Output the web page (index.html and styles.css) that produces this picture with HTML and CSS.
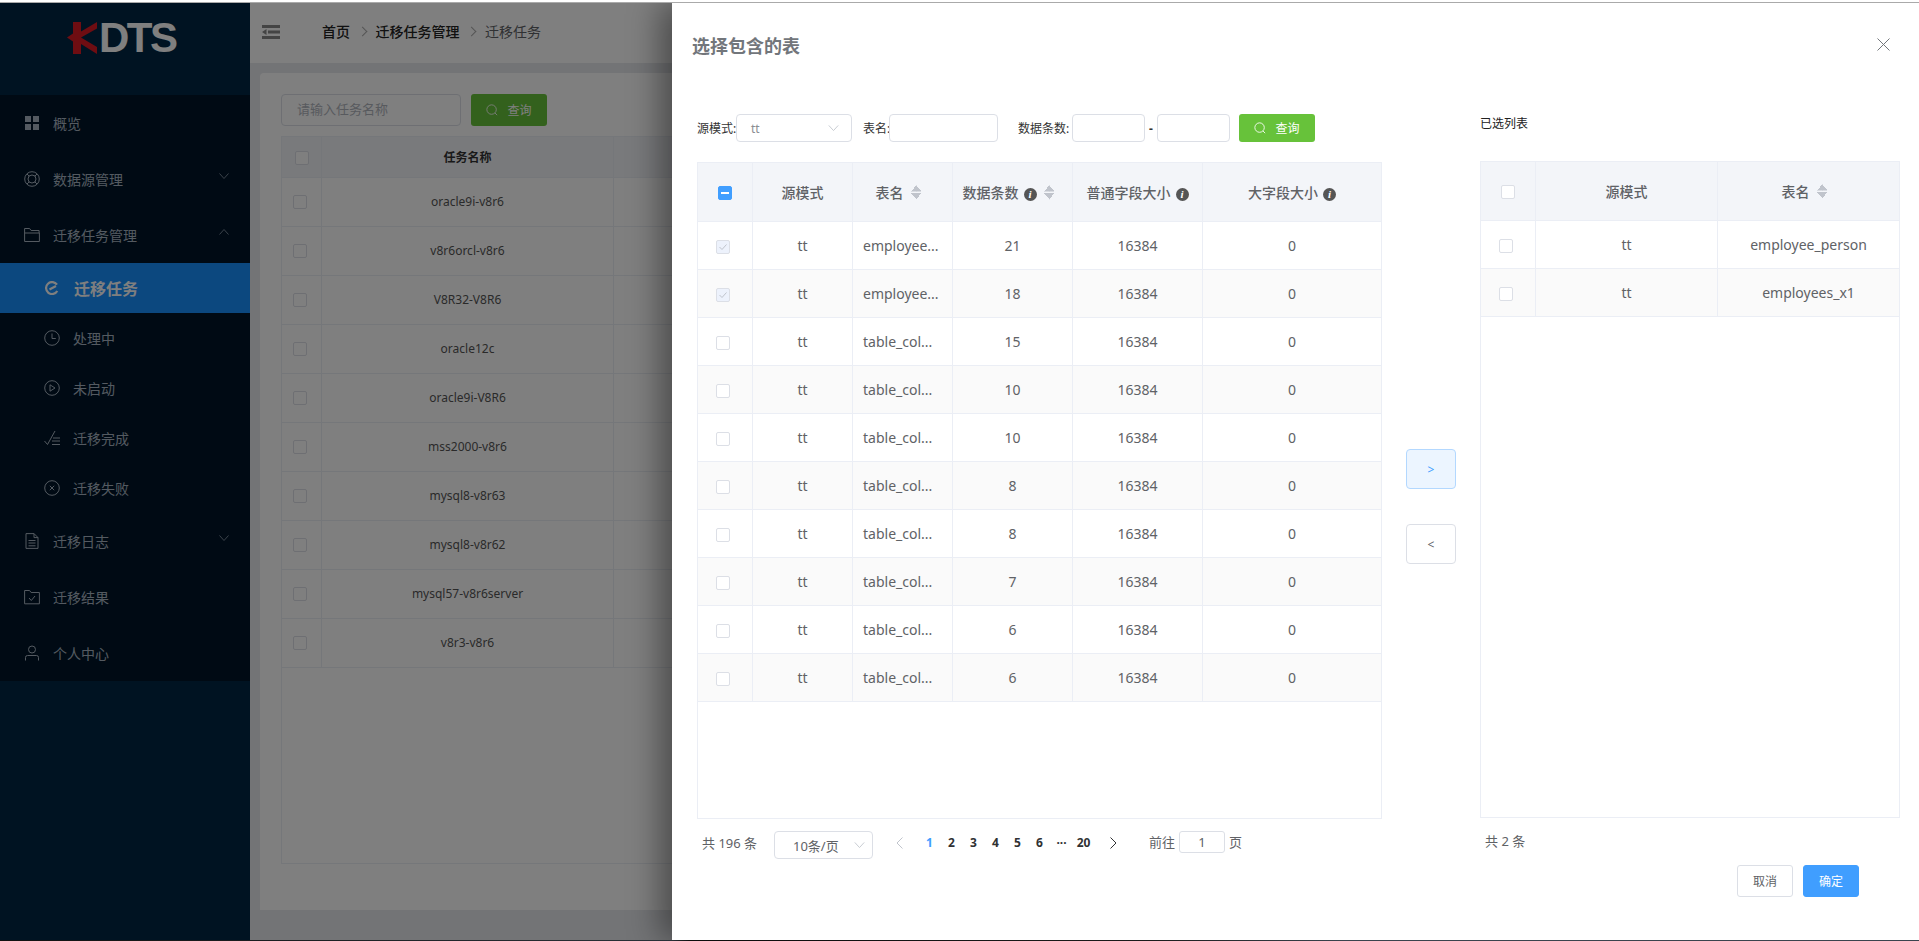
FILE: index.html
```html
<!DOCTYPE html>
<html lang="zh-CN">
<head>
<meta charset="utf-8">
<title>KDTS 迁移任务</title>
<link rel="stylesheet" href="styles.css">
</head>
<body>
<div class="top-strip"></div>
<div class="stage">
  <div class="app">
    <aside class="sidebar">
      <div class="logo">
        <svg class="logo-k" viewBox="0 0 30 32" width="30" height="32"><path fill="#dc1a24" d="M6 0h8v9.5L30 0v6.5L14 15.500 30 25v7L14 22v10H6V19.500L0 15.500l6-4z"/></svg>
        <span class="logo-text">DTS</span>
      </div>
      <nav class="menu">
        <a class="mi"><svg class="ic" viewBox="0 0 16 16"><path fill="currentColor" d="M1 1h6v6H1zM9 1h6v6H9zM1 9h6v6H1zM9 9h6v6H9z"/></svg><span>概览</span></a>
        <a class="mi"><svg class="ic" viewBox="0 0 16 16" fill="none" stroke="currentColor"><circle cx="8" cy="8" r="7.300"/><circle cx="8" cy="8" r="4"/><path d="M3 3l2.200 2.200M13 3l-2.200 2.200M3 13l2.200-2.200M13 13l-2.200-2.200"/></svg><span>数据源管理</span><svg class="chev" viewBox="0 0 10 6"><path d="M.5.5L5 5.500 9.500.5"/></svg></a>
        <a class="mi"><svg class="ic" viewBox="0 0 16 16" fill="none" stroke="currentColor"><path d="M.6 14.500V1.500h5l1.500 2h8v2.500M.6 14.500h14.800V6H.6"/></svg><span>迁移任务管理</span><svg class="chev" viewBox="0 0 10 6"><path d="M.5 5.500L5 .5l4.500 5"/></svg></a>
        <a class="si active"><svg class="ic-a" viewBox="0 0 14 14" fill="none" stroke="currentColor" stroke-width="2.200"><path d="M12 3.600A6 6 0 1 0 12.300 10M4.500 8.500L11 5"/></svg><span>迁移任务</span></a>
        <a class="si"><svg class="ic" viewBox="0 0 16 16" fill="none" stroke="currentColor"><circle cx="8" cy="8" r="7.300"/><path d="M8 3.500V8.500h3.800"/></svg><span>处理中</span></a>
        <a class="si"><svg class="ic" viewBox="0 0 16 16" fill="none" stroke="currentColor"><circle cx="8" cy="8" r="7.300"/><path d="M6 4.800v6.400L11 8z"/></svg><span>未启动</span></a>
        <a class="si"><svg class="ic" viewBox="0 0 16 16" fill="none" stroke="currentColor"><path d="M.5 11l3 3.500L11 1M9 8h7M8 11h8M8 14.500h8"/></svg><span>迁移完成</span></a>
        <a class="si"><svg class="ic" viewBox="0 0 16 16" fill="none" stroke="currentColor"><circle cx="8" cy="8" r="7.300"/><path d="M5.800 5.800l4.400 4.400M10.200 5.800l-4.400 4.400"/></svg><span>迁移失败</span></a>
        <a class="mi"><svg class="ic" viewBox="0 0 16 16" fill="none" stroke="currentColor"><path d="M2 .6h8l4 4v10.800H2zM10 .6v4h4M4.500 7.500h7M4.500 10h7M4.500 12.800h7"/></svg><span>迁移日志</span><svg class="chev" viewBox="0 0 10 6"><path d="M.5.5L5 5.500 9.500.5"/></svg></a>
        <a class="mi"><svg class="ic" viewBox="0 0 16 16" fill="none" stroke="currentColor"><path d="M.6 14.800V1.500h5l1.500 2h8.300v11.300zM5 9l2.300 2.500L11 7"/></svg><span>迁移结果</span></a>
        <a class="mi"><svg class="ic" viewBox="0 0 16 16" fill="none" stroke="currentColor"><circle cx="8" cy="4.500" r="3.500"/><path d="M1.500 15.500V12.500q0-2 2-2h9q2 0 2 2v3"/></svg><span>个人中心</span></a>
      </nav>
    </aside>
    <main class="main">
      <header class="topbar">
        <svg class="burger" viewBox="0 0 18 14"><path fill="#888" d="M0 0h18v3H0zM0 11h18v3H0zM6 5.500h12v3H6zM4.500 4v6L0 7z"/></svg>
        <div class="crumbs">
          <b>首页</b><i class="sep"></i><b>迁移任务管理</b><i class="sep"></i><span>迁移任务</span>
        </div>
      </header>
      <section class="content">
        <div class="card">
          <div class="search">
            <div class="s-input">请输入任务名称</div>
            <button class="s-btn"><svg class="mag" viewBox="0 0 14 14" fill="none" stroke="currentColor"><circle cx="6.500" cy="6.500" r="5.500"/><path d="M10.500 10.500l2.500 2.500"/></svg>查询</button>
          </div>
          <div class="bg-table">
            <table class="tb tb-bg">
              <colgroup><col class="c40"><col class="c293"><col></colgroup>
              <thead><tr><th><i class="cb"></i></th><th>任务名称</th><th></th></tr></thead>
              <tbody>
                <tr><td><i class="cb"></i></td><td>oracle9i-v8r6</td><td></td></tr>
                <tr><td><i class="cb"></i></td><td>v8r6orcl-v8r6</td><td></td></tr>
                <tr><td><i class="cb"></i></td><td>V8R32-V8R6</td><td></td></tr>
                <tr><td><i class="cb"></i></td><td>oracle12c</td><td></td></tr>
                <tr><td><i class="cb"></i></td><td>oracle9i-V8R6</td><td></td></tr>
                <tr><td><i class="cb"></i></td><td>mss2000-v8r6</td><td></td></tr>
                <tr><td><i class="cb"></i></td><td>mysql8-v8r63</td><td></td></tr>
                <tr><td><i class="cb"></i></td><td>mysql8-v8r62</td><td></td></tr>
                <tr><td><i class="cb"></i></td><td>mysql57-v8r6server</td><td></td></tr>
                <tr><td><i class="cb"></i></td><td>v8r3-v8r6</td><td></td></tr>
              </tbody>
            </table>
          </div>
        </div>
      </section>
    </main>
  </div>
  <div class="overlay"></div>
  <div class="drawer">
    <div class="d-head">
      <h2>选择包含的表</h2>
      <svg class="close" viewBox="0 0 13 13"><path d="M.5.5l12 12M12.500.5l-12 12"/></svg>
    </div>
    <div class="d-body">
      <div class="left">
        <div class="filters">
          <label class="l1">源模式:</label>
          <div class="sel sel1"><span>tt</span><svg class="sel-ch" viewBox="0 0 12 7"><path d="M.5.5L6 6.500 11.500.5"/></svg></div>
          <label class="l2">表名:</label>
          <div class="inp w108"></div>
          <label class="l3">数据条数:</label>
          <div class="inp w73"></div>
          <span class="dash">-</span>
          <div class="inp w73"></div>
          <button class="q-btn"><svg class="mag" viewBox="0 0 14 14" fill="none" stroke="currentColor"><circle cx="6.500" cy="6.500" r="5.500"/><path d="M10.500 10.500l2.500 2.500"/></svg>查询</button>
        </div>
        <div class="tbl-wrap h657">
          <table class="tb tb-d">
            <colgroup><col class="w56"><col class="w100"><col class="w100"><col class="w120"><col class="w130"><col></colgroup>
            <thead><tr>
              <th class="hc"><i class="cb"></i></th>
              <th>源模式</th>
              <th>表名<i class="sort"></i></th>
              <th>数据条数<i class="info">i</i><i class="sort"></i></th>
              <th>普通字段大小<i class="info">i</i></th>
              <th>大字段大小<i class="info">i</i></th>
            </tr></thead>
            <tbody>
              <tr><td><i class="cb dis"><svg viewBox="0 0 12 12"><path d="M2.500 6l2.500 2.500 4.500-5"/></svg></i></td><td>tt</td><td class="lf">employee...</td><td>21</td><td>16384</td><td>0</td></tr>
              <tr><td><i class="cb dis"><svg viewBox="0 0 12 12"><path d="M2.500 6l2.500 2.500 4.500-5"/></svg></i></td><td>tt</td><td class="lf">employee...</td><td>18</td><td>16384</td><td>0</td></tr>
              <tr><td><i class="cb"></i></td><td>tt</td><td class="lf">table_col...</td><td>15</td><td>16384</td><td>0</td></tr>
              <tr><td><i class="cb"></i></td><td>tt</td><td class="lf">table_col...</td><td>10</td><td>16384</td><td>0</td></tr>
              <tr><td><i class="cb"></i></td><td>tt</td><td class="lf">table_col...</td><td>10</td><td>16384</td><td>0</td></tr>
              <tr><td><i class="cb"></i></td><td>tt</td><td class="lf">table_col...</td><td>8</td><td>16384</td><td>0</td></tr>
              <tr><td><i class="cb"></i></td><td>tt</td><td class="lf">table_col...</td><td>8</td><td>16384</td><td>0</td></tr>
              <tr><td><i class="cb"></i></td><td>tt</td><td class="lf">table_col...</td><td>7</td><td>16384</td><td>0</td></tr>
              <tr><td><i class="cb"></i></td><td>tt</td><td class="lf">table_col...</td><td>6</td><td>16384</td><td>0</td></tr>
              <tr><td><i class="cb"></i></td><td>tt</td><td class="lf">table_col...</td><td>6</td><td>16384</td><td>0</td></tr>
            </tbody>
          </table>
        </div>
        <div class="pager">
          <span class="total">共 196 条</span>
          <div class="sel sel2"><span>10条/页</span><svg class="sel-ch" viewBox="0 0 12 7"><path d="M.5.5L6 6.500 11.500.5"/></svg></div>
          <svg class="pg-arrow off" viewBox="0 0 7 12"><path d="M6.500.5L1 6l5.500 5.500"/></svg>
          <ul class="pages">
            <li class="cur">1</li><li>2</li><li>3</li><li>4</li><li>5</li><li>6</li><li>···</li><li>20</li>
          </ul>
          <svg class="pg-arrow" viewBox="0 0 7 12"><path d="M.5.500L6 6 .5 11.500"/></svg>
          <span class="goto">前往</span>
          <div class="pg-input">1</div>
          <span class="page-w">页</span>
        </div>
      </div>
      <div class="mid">
        <button class="mv on">&gt;</button>
        <button class="mv">&lt;</button>
      </div>
      <div class="right">
        <div class="r-title">已选列表</div>
        <div class="tbl-wrap h657">
          <table class="tb tb-d">
            <colgroup><col class="w55"><col class="w182"><col></colgroup>
            <thead><tr><th class="hc"><i class="cb"></i></th><th>源模式</th><th>表名<i class="sort"></i></th></tr></thead>
            <tbody>
              <tr><td><i class="cb"></i></td><td>tt</td><td>employee_person</td></tr>
              <tr><td><i class="cb"></i></td><td>tt</td><td>employees_x1</td></tr>
            </tbody>
          </table>
        </div>
        <div class="r-total">共 2 条</div>
      </div>
    </div>
    <div class="d-foot">
      <button class="f-btn">取消</button>
      <button class="f-btn pri">确定</button>
    </div>
  </div>
</div>
<div class="bottom-strip"></div>
</body>
</html>
```
FILE: styles.css
```css
* { box-sizing: border-box; }
html, body { margin: 0; height: 100%; overflow: hidden; }
body {
  display: flex; flex-direction: column; background: #fff;
  font-family: "Noto Sans", "Noto Sans CJK SC", sans-serif; font-size: 14px; color: #606266;
}
i { font-style: normal; }
button { font-family: inherit; cursor: pointer; padding: 0; }

.top-strip { height: 3px; flex: none; background: #fff; border-bottom: 1px solid #aaa; }
.bottom-strip { height: 1px; flex: none; background: linear-gradient(90deg, #111 0, #2a3138 35%, #0c0c0c 36%, #1c1c1c 60%, #3a444e 70%, #3a444e 100%); }
.stage { position: relative; flex: 1; min-height: 0; overflow: hidden; }
.app { display: flex; height: 100%; }

.sidebar { width: 250px; flex: none; background: #002744; color: #a9b5c2; }
.logo { height: 92px; display: flex; align-items: flex-start; padding: 19px 0 0 67px; }
.logo-k { flex: none; }
.logo-text { font: bold 42px/31px "Liberation Sans", sans-serif; color: #fff; letter-spacing: -2.500px; margin-left: 2px; height: 31px; }
.menu { background: #001529; display: flex; flex-direction: column; }
.mi, .si { display: flex; align-items: center; }
.mi { height: 56px; padding-left: 24px; position: relative; }
.si { height: 50px; padding-left: 44px; }
.ic { width: 16px; height: 16px; flex: none; margin-right: 13px; }
.chev { position: absolute; left: 219px; top: 22px; width: 10px; height: 6px; fill: none; stroke: currentColor; opacity: .7; }
.si.active { background: #1890ff; color: #fff; font-size: 16px; font-weight: bold; padding-left: 45px; }
.ic-a { width: 14px; height: 14px; margin-right: 15px; flex: none; }

.main { flex: 1; min-width: 0; display: flex; flex-direction: column; background: #e7e9ed; }
.topbar { height: 60px; flex: none; background: #fff; display: flex; align-items: center; padding-left: 12px; }
.burger { width: 18px; height: 14px; margin-right: 42px; flex: none; margin-top: -2px; }
.crumbs { display: flex; align-items: center; margin-top: -4px; color: #606266; font-size: 14px; }
.crumbs b { color: #222; font-weight: 500; }
.sep { width: 7px; height: 7px; border-top: 1px solid #aaa; border-right: 1px solid #aaa; transform: rotate(45deg); margin: 0 10px 0 8.500px; }
.content { flex: 1; padding: 10px 0 30px 10px; min-height: 0; }
.card { background: #fff; height: 100%; padding: 21px 0 0 21px; border-radius: 4px 0 0 0; }
.search { display: flex; gap: 10px; height: 32px; }
.s-input { width: 180px; border: 1px solid #dcdfe6; border-radius: 4px; padding: 0 15px; line-height: 28px; color: #b0b4bc; font-size: 13px; }
.s-btn { width: 76px; border: 0; border-radius: 3px; background: #67c23a; color: #fff; font-size: 12px; display: flex; align-items: center; justify-content: center; }
.mag { width: 12px; height: 14px; margin-right: 9px; flex: none; }
.bg-table { margin-top: 10px; height: 728px; border: 1px solid #ebeef5; border-right: 0; }
.tb { table-layout: fixed; border-collapse: separate; border-spacing: 0; width: 100%; }
.tb th, .tb td { border-right: 1px solid #ebeef5; border-bottom: 1px solid #ebeef5; text-align: center; padding: 0; }
.tb-bg th { height: 41px; background: #f3f5f9; font-size: 12px; color: #333; padding-bottom: 1px; }
.tb-bg td { height: 49px; font-size: 12px; color: #555; padding-bottom: 2px; }
.c40 { width: 40px; }
.c293 { width: 292px; }
.tb-bg th .cb { margin-right: 0; }

.overlay { position: absolute; inset: 0; background: rgba(0,0,0,.5); }
.drawer {
  position: absolute; left: 672px; right: 0; top: 0; bottom: 0; background: #fff;
  box-shadow: -12px 0 30px rgba(0,0,0,.4); display: flex; flex-direction: column;
}
.d-head { height: 111px; flex: none; position: relative; padding: 29px 0 0 20px; }
.d-head h2 { margin: 0; font-size: 18px; line-height: 28px; font-weight: 700; color: #72767b; }
.close { position: absolute; left: 1205px; top: 35px; width: 13px; height: 13px; fill: none; stroke: #72767b; }
.d-body { display: flex; padding-left: 25px; }
.left { width: 685px; flex: none; }
.filters { display: flex; align-items: center; height: 28px; margin-bottom: 20px; font-size: 12px; color: #333; }
.filters label { white-space: nowrap; }
.sel { border: 1px solid #dcdfe6; border-radius: 4px; height: 28px; display: flex; align-items: center; justify-content: space-between; }
.sel1 { width: 116px; padding: 0 12px 0 14px; font-size: 12px; color: #8a8d93; }
.sel-ch { width: 11px; height: 6px; fill: none; stroke: #c0c4cc; flex: none; }
.l1 { width: 39px; }
.l2 { width: 26px; margin-left: 11px; }
.l3 { width: 54px; margin-left: 20px; }
.inp { height: 28px; border: 1px solid #dcdfe6; border-radius: 4px; }
.w108 { width: 109px; }
.w73 { width: 73px; }
.dash { width: 12px; text-align: center; font-weight: 700; }
.q-btn { margin-left: 9px; width: 76px; height: 28px; border: 0; border-radius: 3px; background: #67c23a; color: #fff; font-size: 12px; display: flex; align-items: center; justify-content: center; }

.tbl-wrap { border: 1px solid #ebeef5; }
.h657 { height: 657px; }
.tb-d th { height: 59px; background: #f3f5f9; font-size: 14px; font-weight: 500; color: #606266; white-space: nowrap; padding-bottom: 1px; }
.tb-d td { height: 48px; font-size: 14px; color: #606266; }
.tb-d tbody tr:nth-child(even) td { background: #fafafa; }
.tb-d th:last-child, .tb-d td:last-child { border-right: 0; }
.w56 { width: 55px; } .w100 { width: 100px; } .w120 { width: 120px; } .w130 { width: 130px; }
.w55 { width: 55px; } .w182 { width: 182px; }
.tb-d .lf { text-align: left; padding: 0 10px; white-space: nowrap; }
.cb { display: inline-block; width: 14px; height: 14px; border: 1px solid #dcdfe6; border-radius: 2px; background: #fff; vertical-align: middle; margin-right: 4px; }
.hc .cb { margin-right: 0; }
.tb-d thead tr:first-child .hc .cb { position: relative; }
.left .hc .cb { background: #409eff; border-color: #409eff; }
.left .hc .cb::after { content: ""; position: absolute; left: 2px; right: 2px; top: 5px; height: 2px; background: #fff; }
.cb.dis { background: #edf2fc; }
.cb svg { display: block; width: 12px; height: 12px; fill: none; stroke: #c0c4cc; }
.sort { display: inline-block; width: 11px; height: 15px; margin: 0 8px 0 7px; vertical-align: -2px;
  background:
    linear-gradient(to top left, #c0c4cc 50%, transparent 50%) left top / 5.500px 6.500px no-repeat,
    linear-gradient(to top right, #c0c4cc 50%, transparent 50%) right top / 5.500px 6.500px no-repeat,
    linear-gradient(to bottom left, #c0c4cc 50%, transparent 50%) left bottom / 5.500px 6.500px no-repeat,
    linear-gradient(to bottom right, #c0c4cc 50%, transparent 50%) right bottom / 5.500px 6.500px no-repeat;
}
.info { display: inline-block; width: 13px; height: 13px; border-radius: 50%; background: #555; color: #fff; font: italic bold 11px/13px "Liberation Serif", serif; text-align: center; margin-left: 5px; vertical-align: 0; }

.pager { display: flex; align-items: center; height: 28px; margin-top: 12px; font-size: 13px; color: #606266; }
.total { margin: -6px 0 0 5px; width: 72px; white-space: nowrap; }
.sel2 { width: 99px; padding: 0 7px 0 18px; font-size: 13px; color: #606266; }
.pg-arrow { width: 7px; height: 12px; fill: none; stroke: #303133; flex: none; margin-top: -4px; }
.pg-arrow.off { stroke: #c0c4cc; margin-left: 23px; }
.pages { list-style: none; margin: -6px 0 0 15.500px; padding: 0; display: flex; font-weight: 700; font-size: 12px; color: #303133; }
.pages li { width: 22px; text-align: center; }
.pages .cur { color: #409eff; }
.pages + .pg-arrow { margin-left: 15px; }
.goto { margin: -7px 0 0 32.500px; white-space: nowrap; }
.pg-input { width: 46px; height: 22px; border: 1px solid #dcdfe6; border-radius: 3px; text-align: center; line-height: 20px; margin: -6px 4px 0 4px; }
.page-w { margin-top: -7px; }

.mid { width: 98px; flex: none; padding: 335px 0 0 24px; display: flex; flex-direction: column; gap: 35px; align-items: flex-start; }
.mv { width: 50px; height: 40px; border: 1px solid #dcdfe6; border-radius: 4px; background: #fff; color: #606266; font-size: 12px; }
.mv.on { background: #ecf5ff; border-color: #b3d8ff; color: #409eff; }

.right { width: 420px; flex: none; }
.r-title { height: 48px; margin-top: -1px; font-size: 12px; line-height: 22px; color: #222; }
.r-total { margin-top: 13px; padding-left: 5px; font-size: 13px; line-height: 20px; }

.d-foot { display: flex; justify-content: flex-end; gap: 10px; padding-right: 60px; margin-top: 6px; }
.f-btn { width: 56px; height: 32px; border: 1px solid #dcdfe6; border-radius: 3px; background: #fff; color: #606266; font-size: 12px; }
.f-btn.pri { background: #409eff; border-color: #409eff; color: #fff; }
```
